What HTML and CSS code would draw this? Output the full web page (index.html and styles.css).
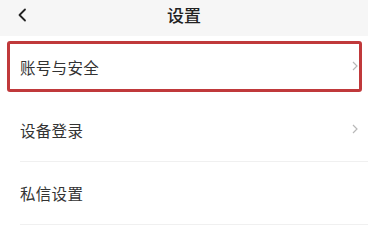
FILE: index.html
```html
<!DOCTYPE html>
<html lang="zh">
<head>
<meta charset="utf-8">
<link rel="stylesheet" href="styles.css">
</head>
<body>
<div class="page">
  <header class="nav">
    <span class="back">
      <svg width="10" height="14" viewBox="0 0 10 14"><path d="M8 1.5 L2.5 7 L8 12.5" fill="none" stroke="#222" stroke-width="1.8" stroke-linecap="round" stroke-linejoin="round"/></svg>
    </span>
    <h1 class="title">设置</h1>
  </header>
  <ul class="list">
    <li class="row row-first">
      <span class="label">账号与安全</span>
      <svg class="chev" width="6" height="10" viewBox="0 0 6 10"><path d="M1 1 L5 5 L1 9" fill="none" stroke="#b8b8b8" stroke-width="1.2"/></svg>
      <span class="highlight"></span>
    </li>
    <li class="row">
      <span class="label">设备登录</span>
      <svg class="chev" width="6" height="10" viewBox="0 0 6 10"><path d="M1 1 L5 5 L1 9" fill="none" stroke="#b8b8b8" stroke-width="1.2"/></svg>
    </li>
    <li class="row">
      <span class="label">私信设置</span>
    </li>
  </ul>
</div>
</body>
</html>
```

FILE: styles.css
```css
* { box-sizing: border-box; }
html, body { margin: 0; padding: 0; }
body {
  width: 368px;
  height: 234px;
  overflow: hidden;
  background: #ffffff;
  font-family: "Noto Sans CJK SC", "Noto Sans", sans-serif;
  color: #222;
}
.nav {
  position: relative;
  height: 36px;
  background: #f6f6f6;
  display: flex;
  align-items: center;
  justify-content: center;
}
.back {
  position: absolute;
  left: 17px;
  top: 8px;
  display: flex;
}
.title {
  margin: 0;
  font-size: 17px;
  font-weight: 500;
  line-height: 1;
  margin-top: -7px;
  color: #222;
}
.list {
  list-style: none;
  margin: 0;
  padding: 0 0 0 20px;
}
.row {
  position: relative;
  height: 63px;
  display: flex;
  align-items: center;
  justify-content: space-between;
  padding-right: 10px;
  border-bottom: 1px solid #f0f0f0;
}
.row-first { border-bottom-color: transparent; }
.label {
  font-size: 15.5px;
  color: #333;
  letter-spacing: 0.3px;
}
.chev { display: block; margin-top: -2px; }
.highlight {
  position: absolute;
  left: -13px;
  right: 6px;
  top: 5px;
  bottom: 6px;
  border: 3px solid #c0393b;
  border-radius: 3px;
}
```
